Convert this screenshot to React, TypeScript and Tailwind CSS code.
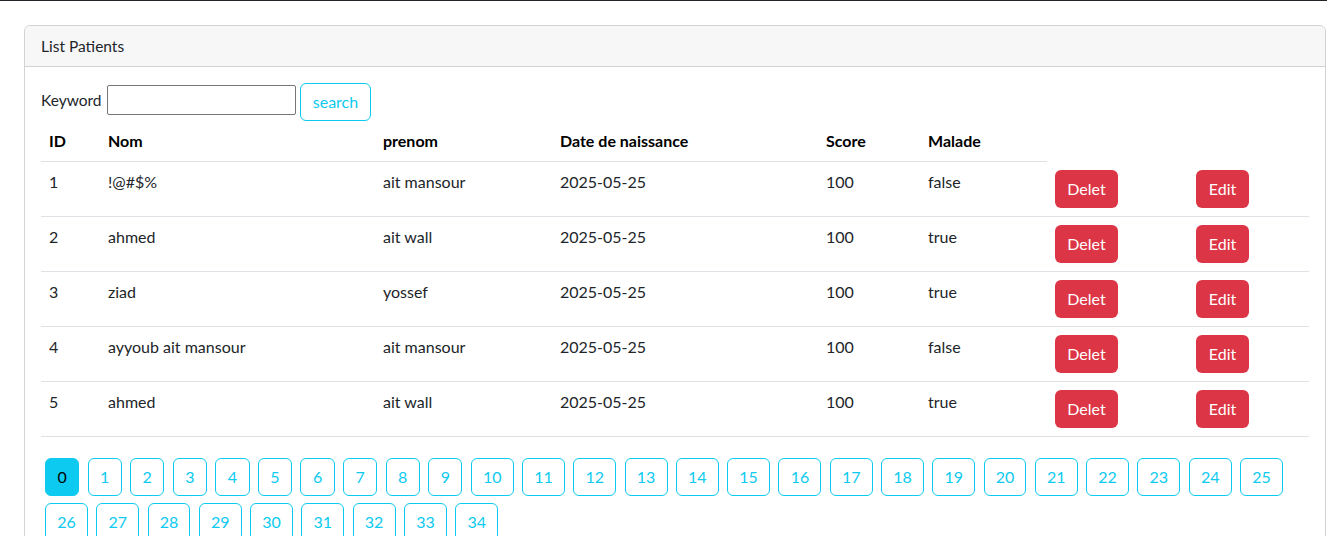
import React from 'react'

const patients = [
  { id: 1, nom: '!@#$%', prenom: 'ait mansour', date: '2025-05-25', score: 100, malade: 'false' },
  { id: 2, nom: 'ahmed', prenom: 'ait wall', date: '2025-05-25', score: 100, malade: 'true' },
  { id: 3, nom: 'ziad', prenom: 'yossef', date: '2025-05-25', score: 100, malade: 'true' },
  { id: 4, nom: 'ayyoub ait mansour', prenom: 'ait mansour', date: '2025-05-25', score: 100, malade: 'false' },
  { id: 5, nom: 'ahmed', prenom: 'ait wall', date: '2025-05-25', score: 100, malade: 'true' },
]

const pages = Array.from({ length: 35 }, (_, i) => i)

export default function App() {
  return (
    <div className="min-h-screen bg-white text-[#212529] text-[16px] leading-6 font-['Lato','Open_Sans',sans-serif]">
      <div className="h-px bg-[#212529]" />
      <div className="pl-6 pt-6">
        <div className="w-[1302px] rounded-[6px] border border-[#d3d3d3] bg-white">
          {/* header */}
          <div className="rounded-t-[6px] border-b border-[#d3d3d3] bg-[#f7f7f7] px-4 py-2 text-[15.5px]">
            List Patients
          </div>

          <div className="px-4 pt-4">
            {/* search form */}
            <form className="flex items-start">
              <label className="block w-[66px] pt-[5px] text-[15.5px]">Keyword</label>
              <input
                type="text"
                className="mt-[2px] h-[30px] w-[189px] rounded-[2px] border border-[#767676] px-1 outline-none"
              />
              <button
                type="button"
                className="ml-1 h-[38px] w-[71px] rounded-md border border-[#0dcaf0] text-[16px] text-[#0dcaf0]"
              >
                search
              </button>
            </form>

            {/* table */}
            <table className="w-[1268px] table-fixed border-collapse">
              <colgroup>
                <col className="w-[59px]" />
                <col className="w-[275px]" />
                <col className="w-[177px]" />
                <col className="w-[266px]" />
                <col className="w-[102px]" />
                <col className="w-[127px]" />
                <col className="w-[141px]" />
                <col className="w-[121px]" />
              </colgroup>
              <thead>
                <tr>
                  {['ID', 'Nom', 'prenom', 'Date de naissance', 'Score', 'Malade'].map(h => (
                    <th key={h} className="border-b border-[#dee2e6] p-2 text-left text-[16px] font-bold text-black">
                      {h}
                    </th>
                  ))}
                </tr>
              </thead>
              <tbody>
                {patients.map(p => (
                  <tr key={p.id} className="border-b border-[#dee2e6] align-top text-[16px]">
                    <td className="p-2">{p.id}</td>
                    <td className="p-2">{p.nom}</td>
                    <td className="p-2">{p.prenom}</td>
                    <td className="p-2">{p.date}</td>
                    <td className="p-2">{p.score}</td>
                    <td className="p-2">{p.malade}</td>
                    <td className="p-2">
                      <button className="h-[38px] w-[63px] rounded-md bg-[#dc3545] text-[16px] text-white">Delet</button>
                    </td>
                    <td className="p-2">
                      <button className="h-[38px] w-[53px] rounded-md bg-[#dc3545] text-[16px] text-white">Edit</button>
                    </td>
                  </tr>
                ))}
              </tbody>
            </table>

            {/* pagination */}
            <ul className="ml-1 mt-[21px] flex flex-wrap gap-x-[8.4px] gap-y-[7px]">
              {pages.map(n => (
                <li key={n}>
                  <button
                    className={
                      (n < 10 ? 'w-[34.2px] ' : 'w-[42.9px] ') +
                      (n === 0
                        ? 'h-[38px] rounded-md border border-[#0dcaf0] bg-[#0dcaf0] text-[16px] text-black'
                        : 'h-[38px] rounded-md border border-[#0dcaf0] bg-white text-[16px] text-[#0dcaf0]')
                    }
                  >
                    {n}
                  </button>
                </li>
              ))}
            </ul>
          </div>
        </div>
      </div>
    </div>
  )
}
